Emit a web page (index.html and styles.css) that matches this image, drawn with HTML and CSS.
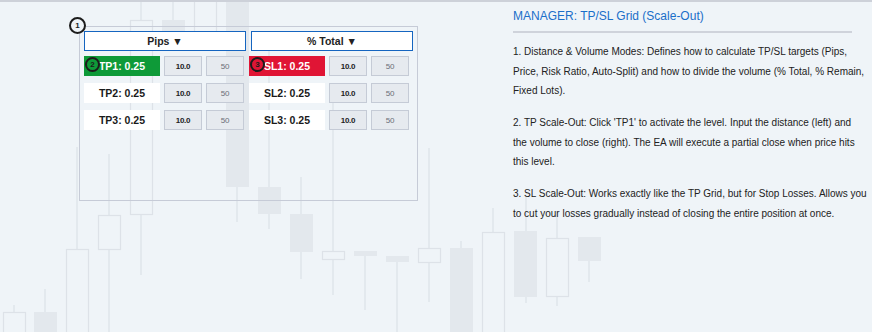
FILE: index.html
```html
<!DOCTYPE html>
<html lang="en">
<head>
    <meta charset="UTF-8">
    <title>TP/SL Grid (Scale-Out)</title>
    <link rel="stylesheet" href="styles.css">
</head>
<body>

    <svg class="chart" width="872" height="332" viewBox="0 0 872 332" aria-hidden="true">
        <g class="wick">
            <line x1="14" y1="303" x2="14" y2="310"/>
            <line x1="45" y1="287" x2="45" y2="310"/>
            <line x1="77" y1="145" x2="77" y2="247"/>
            <line x1="109" y1="152" x2="109" y2="213"/>
            <line x1="109" y1="247" x2="109" y2="332"/>
            <line x1="141" y1="0" x2="141" y2="18"/>
            <line x1="141" y1="212" x2="141" y2="273"/>
            <line x1="173" y1="0" x2="173" y2="18"/>
            <line x1="237" y1="185" x2="237" y2="220"/>
            <line x1="269" y1="30" x2="269" y2="185"/>
            <line x1="269" y1="212" x2="269" y2="227"/>
            <line x1="301" y1="175" x2="301" y2="212"/>
            <line x1="301" y1="250" x2="301" y2="277"/>
            <line x1="333" y1="100" x2="333" y2="249"/>
            <line x1="333" y1="257" x2="333" y2="293"/>
            <line x1="365" y1="254" x2="365" y2="308"/>
            <line x1="397" y1="260" x2="397" y2="332"/>
            <line x1="429" y1="146" x2="429" y2="246"/>
            <line x1="429" y1="260" x2="429" y2="300"/>
            <line x1="461" y1="239" x2="461" y2="246"/>
            <line x1="493" y1="206" x2="493" y2="230"/>
            <line x1="526" y1="195" x2="526" y2="229"/>
            <line x1="526" y1="295" x2="526" y2="301"/>
            <line x1="557" y1="209" x2="557" y2="236"/>
            <line x1="557" y1="294" x2="557" y2="304"/>
            <line x1="589" y1="259" x2="589" y2="280"/>
        </g>
        <g class="hollow">
            <rect x="3.5" y="310.5" width="22" height="30"/>
            <rect x="66.5" y="247.5" width="22" height="90"/>
            <rect x="98.5" y="213.5" width="22" height="34"/>
            <rect x="130.5" y="18.5" width="22" height="194"/>
            <rect x="194.5" y="-2" width="22" height="42"/>
            <rect x="322.5" y="249.5" width="22" height="8"/>
            <rect x="418.5" y="246.5" width="22" height="14"/>
            <rect x="482.5" y="230.5" width="22" height="110"/>
            <rect x="546.5" y="236.5" width="22" height="58"/>
        </g>
        <g class="filled">
            <rect x="34" y="310" width="23" height="22"/>
            <rect x="162" y="18" width="23" height="13"/>
            <rect x="226" y="0" width="23" height="185"/>
            <rect x="258" y="185" width="23" height="27"/>
            <rect x="290" y="212" width="23" height="38"/>
            <rect x="354" y="249" width="23" height="5"/>
            <rect x="386" y="254" width="23" height="6"/>
            <rect x="450" y="246" width="23" height="86"/>
            <rect x="514" y="229" width="23" height="66"/>
            <rect x="578" y="235" width="23" height="24"/>
        </g>
    </svg>

    <div class="page">

        <div class="panel">
            <span class="marker marker-panel">1</span>

            <div class="modes">
                <button class="mode">Pips &#9660;</button>
                <button class="mode">% Total &#9660;</button>
            </div>

            <div class="grid">
                <div class="level-row">
                    <div class="level tp-on">
                        <span class="marker marker-cell">2</span>
                        TP1: 0.25
                    </div>
                    <div class="val">10.0</div>
                    <div class="val dim">50</div>
                </div>
                <div class="level-row">
                    <div class="level sl-on">
                        <span class="marker marker-cell">3</span>
                        SL1: 0.25
                    </div>
                    <div class="val">10.0</div>
                    <div class="val dim">50</div>
                </div>

                <div class="level-row">
                    <div class="level">TP2: 0.25</div>
                    <div class="val">10.0</div>
                    <div class="val dim">50</div>
                </div>
                <div class="level-row">
                    <div class="level">SL2: 0.25</div>
                    <div class="val">10.0</div>
                    <div class="val dim">50</div>
                </div>

                <div class="level-row">
                    <div class="level">TP3: 0.25</div>
                    <div class="val">10.0</div>
                    <div class="val dim">50</div>
                </div>
                <div class="level-row">
                    <div class="level">SL3: 0.25</div>
                    <div class="val">10.0</div>
                    <div class="val dim">50</div>
                </div>
            </div>
        </div>

        <div class="guide">
            <h2>MANAGER: TP/SL Grid (Scale-Out)</h2>
            <p>1. Distance &amp; Volume Modes: Defines how to calculate TP/SL targets (Pips, Price, Risk Ratio, Auto-Split) and how to divide the volume (% Total, % Remain, Fixed Lots).</p>
            <p>2. TP Scale-Out: Click 'TP1' to activate the level. Input the distance (left) and the volume to close (right). The EA will execute a partial close when price hits this level.</p>
            <p>3. SL Scale-Out: Works exactly like the TP Grid, but for Stop Losses. Allows you to cut your losses gradually instead of closing the entire position at once.</p>
        </div>

    </div>

</body>
</html>
```

FILE: styles.css
```css
html, body {
    margin: 0;
    height: 100%;
}
body {
    background-color: #eff4f8;
    border-top: 2px solid #cdd1d9;
    box-sizing: border-box;
    font-family: "Liberation Sans", Arial, sans-serif;
    color: #222;
    position: relative;
    overflow: hidden;
}

/* background chart */
.chart {
    position: absolute;
    left: 0;
    top: 0;
    z-index: 0;
}
.wick line {
    stroke: #dfe4ea;
    stroke-width: 1.4;
}
.hollow rect {
    fill: none;
    stroke: #dde2e8;
    stroke-width: 1.2;
}
.filled rect {
    fill: #e3e8ed;
}

.page {
    position: relative;
    z-index: 1;
    display: flex;
    align-items: flex-start;
}

/* left panel */
.panel {
    position: relative;
    margin: 24px 0 0 79px;
    width: 329px;
    height: 165px;
    padding: 4px;
    border: 1px solid #c6cbd7;
}
.modes {
    display: flex;
    gap: 5px;
}
.mode {
    flex: 1;
    height: 20px;
    padding: 0;
    background: #fff;
    border: 1px solid #1565c0;
    font-family: inherit;
    font-weight: bold;
    font-size: 10.5px;
    color: #222;
}
.grid {
    display: grid;
    grid-template-columns: 160px 160px;
    column-gap: 5px;
    row-gap: 7px;
    margin-top: 5px;
}
.level-row {
    display: grid;
    grid-template-columns: 76px 38px 38px;
    column-gap: 4px;
    height: 20px;
}
.level {
    position: relative;
    background: #fff;
    display: flex;
    align-items: center;
    justify-content: center;
    font-weight: bold;
    font-size: 10.5px;
    color: #1a1a1a;
}
.tp-on {
    background: #0e9a38;
    color: #fff;
}
.sl-on {
    background: #e01535;
    color: #fff;
}
.val {
    box-sizing: border-box;
    background: #e6eaef;
    border: 1px solid #c5cbd6;
    display: flex;
    align-items: center;
    justify-content: center;
    font-weight: bold;
    font-size: 8px;
    letter-spacing: -0.3px;
    color: #222;
}
.val.dim {
    color: #6b6f76;
    font-weight: normal;
}

/* numbered callouts */
.marker {
    position: absolute;
    box-sizing: border-box;
    width: 15px;
    height: 15px;
    border: 2px solid #1c1c1c;
    border-radius: 50%;
    display: flex;
    align-items: center;
    justify-content: center;
    font-weight: bold;
    font-size: 8px;
    color: #1c1c1c;
}
.marker-panel {
    left: -11px;
    top: -10px;
    width: 17px;
    height: 17px;
    background: #eff4f8;
}
.marker-cell {
    left: 1px;
    top: 1px;
}

/* right help text */
.guide {
    margin-left: 95px;
    width: 354px;
    padding-top: 6px;
}
.guide h2 {
    margin: 0;
    padding-bottom: 7px;
    border-bottom: 2px solid #cfd3db;
    width: 339px;
    font-weight: normal;
    font-size: 12px;
    line-height: 16px;
    color: #1a6fc9;
}
.guide p {
    margin: 9px 0 12.5px;
    font-size: 10px;
    line-height: 19.5px;
}
.guide p + p {
    margin-top: 0;
}
```
